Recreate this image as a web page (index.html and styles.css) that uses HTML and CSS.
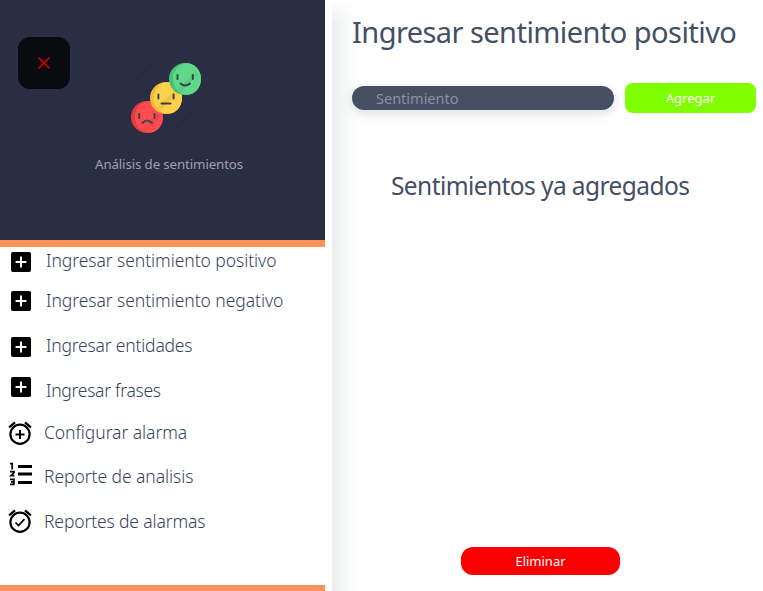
FILE: index.html
```
<!DOCTYPE html>
<html lang="es">
<head>
<meta charset="utf-8">
<title>Análisis de sentimientos</title>
<link rel="stylesheet" href="styles.css">
</head>
<body>
<svg width="0" height="0" class="defs">
  <symbol id="plus" viewBox="0 0 20 20"><rect width="20" height="20" rx="2"/><path d="M10 4.600v10.800M4.600 10h10.800" stroke="#fff" stroke-width="2"/></symbol>
  <symbol id="alarm" viewBox="0 0 24 24"><g fill="none" stroke="#000" stroke-width="2.200"><circle cx="12" cy="13.300" r="9.600"/><path d="M1.100 6.300 7 1.400M22.900 6.300 17 1.400"/></g></symbol>
</svg>
<div class="app">
  <aside class="sidebar">
    <header class="brand">
      <button class="close" aria-label="Cerrar"><svg width="12" height="12" viewBox="0 0 12 12"><path d="M.5.5l11 11M11.5.5l-11 11" stroke="#c80000" stroke-width="1.600"/></svg></button>
      <svg class="faces" width="72" height="72" viewBox="0 0 72 72">
        <path class="streaks" d="M4 20 22 2M2 34 35 1M45 68 68 45M55 69 69 55"/>
        <circle cx="17" cy="55" r="16" fill="#e03d43"/><ellipse cx="19" cy="55" rx="14" ry="15.800" fill="#ff4b4f"/><path class="ink" d="M9.200 52v4M24.500 52v4M12.500 61q4.500-5 9.500 0"/>
        <circle cx="36" cy="36" r="16" fill="#eebd3c"/><ellipse cx="38" cy="36" rx="14" ry="15.800" fill="#ffd04b"/><path class="ink" d="M28.400 32.500v4M43.600 32.500v4M31.500 41.600h9"/>
        <circle cx="55" cy="17" r="16" fill="#4bbf73"/><ellipse cx="57" cy="17" rx="14" ry="15.800" fill="#5fd889"/><path class="ink" d="M47.500 13v4M62.800 13v4M50.500 21.500q4.500 4 9.500 0"/>
        <path class="shine" d="M15 67 29 53M28 48 49 27M49 29 67 11"/>
      </svg>
      <p class="tagline"><span>Análisis de sentimientos</span></p>
    </header>
    <nav class="menu">
      <a class="item r1"><svg class="icon box"><use href="#plus"/></svg><span>Ingresar sentimiento positivo</span></a>
      <a class="item r2"><svg class="icon box"><use href="#plus"/></svg><span>Ingresar sentimiento negativo</span></a>
      <a class="item r3"><svg class="icon box"><use href="#plus"/></svg><span>Ingresar entidades</span></a>
      <a class="item r4"><svg class="icon box"><use href="#plus"/></svg><span>Ingresar frases</span></a>
      <a class="item r5"><svg class="icon wide" viewBox="0 0 24 24"><use href="#alarm"/><path d="M12 9v9M7.500 13.500h9" stroke="#000" stroke-width="2"/></svg><span>Configurar alarma</span></a>
      <a class="item r6"><svg class="icon wide" viewBox="0 0 24 24"><path d="M10 4.500h14M10 12h14M10 20.500h14" stroke="#000" stroke-width="2.800"/><path d="M2 1.700h2.200v5.800M2 9.700h4v1l-3 3h3.400M2 17.300h3.900v5H2M3 19.800h3" fill="none" stroke="#000" stroke-width="1.700"/></svg><span>Reporte de analisis</span></a>
      <a class="item r7"><svg class="icon wide" viewBox="0 0 24 24"><use href="#alarm"/><path d="M7.500 13.500l3 3 6-6.300" fill="none" stroke="#000" stroke-width="1.700"/></svg><span>Reportes de alarmas</span></a>
    </nav>
  </aside>
  <main class="content">
    <h1><span>Ingresar sentimiento positivo</span></h1>
    <form class="entry">
      <input type="text" placeholder="Sentimiento">
      <button class="add" type="button">Agregar</button>
    </form>
    <h2><span>Sentimientos ya agregados</span></h2>
    <button class="remove" type="button">Eliminar</button>
  </main>
</div>
</body>
</html>
```
FILE: styles.css
```
* { box-sizing: border-box; }
body { margin: 0; background: #fff; font-family: "Noto Sans", "Open Sans", sans-serif; color: #444f64; }
button, input { border: 0; padding: 0; font-family: inherit; }
.defs { position: absolute; }
.app { display: flex; width: 763px; height: 591px; overflow: hidden; }
.sidebar { width: 325px; height: 591px; flex: none; border-bottom: 6px solid #ff9159; }
.brand { position: relative; height: 247px; padding-top: 62px; background: #2a2e43; border-bottom: 7px solid #ff9159; }
.close { position: absolute; left: 18px; top: 37px; width: 52px; height: 52px; border-radius: 12px; background: #0a0b11; display: flex; align-items: center; justify-content: center; }
.faces { display: block; margin-left: 130px; }
.ink { fill: none; stroke: #3c4448; stroke-width: 2; stroke-linecap: round; }
.streaks { fill: none; stroke: #282c41; stroke-width: 2; }
.shine { fill: none; stroke: #000; stroke-opacity: .05; stroke-width: 4; }
.tagline { margin: 20px 0 0 95px; font-size: 13.300px; line-height: 20px; color: #9fa1ac; white-space: nowrap; letter-spacing: -.12px; }
.menu { display: flex; flex-direction: column; }
.item { display: flex; align-items: center; height: 28px; font-size: 17.500px; font-weight: 300; line-height: 28px; white-space: nowrap; letter-spacing: -.06px; color: #35435c; }
.item span { margin-top: -2px; }
.icon { flex: none; display: block; }
.box { width: 20px; height: 20px; margin-left: 11px; margin-right: 15px; }
.wide { width: 24px; height: 24px; margin-left: 8px; margin-right: 12px; }
.r1 .icon { margin-top: 2px; }
.r2 { margin-top: 12px; }
.r3 { margin-top: 17px; letter-spacing: -.2px; }
.r3 .icon { margin-top: 2px; }
.r4 { margin-top: 17px; letter-spacing: -.28px; }
.r4 .icon { margin-bottom: 8px; }
.r5 { margin-top: 14px; }
.r6 { margin-top: 16px; }
.r6 .icon { margin-bottom: 6px; }
.r7 { margin-top: 17px; letter-spacing: -.14px; }
.r7 .icon { margin-bottom: 3px; }
.content { flex: none; width: 431px; height: 591px; margin-left: 7px; padding-left: 20px; background: linear-gradient(#fff, rgba(255,255,255,0) 22px), linear-gradient(90deg, #eceef0, #f4f5f6 10px, #fbfcfc 20px, #fff 30px); }
h1 { margin: 0; padding-top: 11px; font-size: 29px; font-weight: 400; line-height: 42px; height: 54px; white-space: nowrap; letter-spacing: -.56px; }
.entry { display: flex; align-items: center; gap: 11px; margin-top: 29px; height: 30px; }
input { width: 262px; height: 24px; padding-left: 24px; border-radius: 12px; background: #455064; font-size: 14.500px; box-shadow: 0 3px 12px rgba(0,0,0,.14); }
input::placeholder { color: #8a91a0; opacity: 1; }
.add { width: 131px; height: 30px; border-radius: 8px; background: #80ff00; color: #fff; font-size: 13px; }
h2 { margin: 55px 0 0 39px; font-size: 24.500px; font-weight: 400; line-height: 36px; white-space: nowrap; letter-spacing: -.58px; }
.remove { display: block; width: 159px; height: 28px; margin: 343px 0 0 109px; border-radius: 12px; background: #fb0000; color: #fff; font-size: 13px; }
```
